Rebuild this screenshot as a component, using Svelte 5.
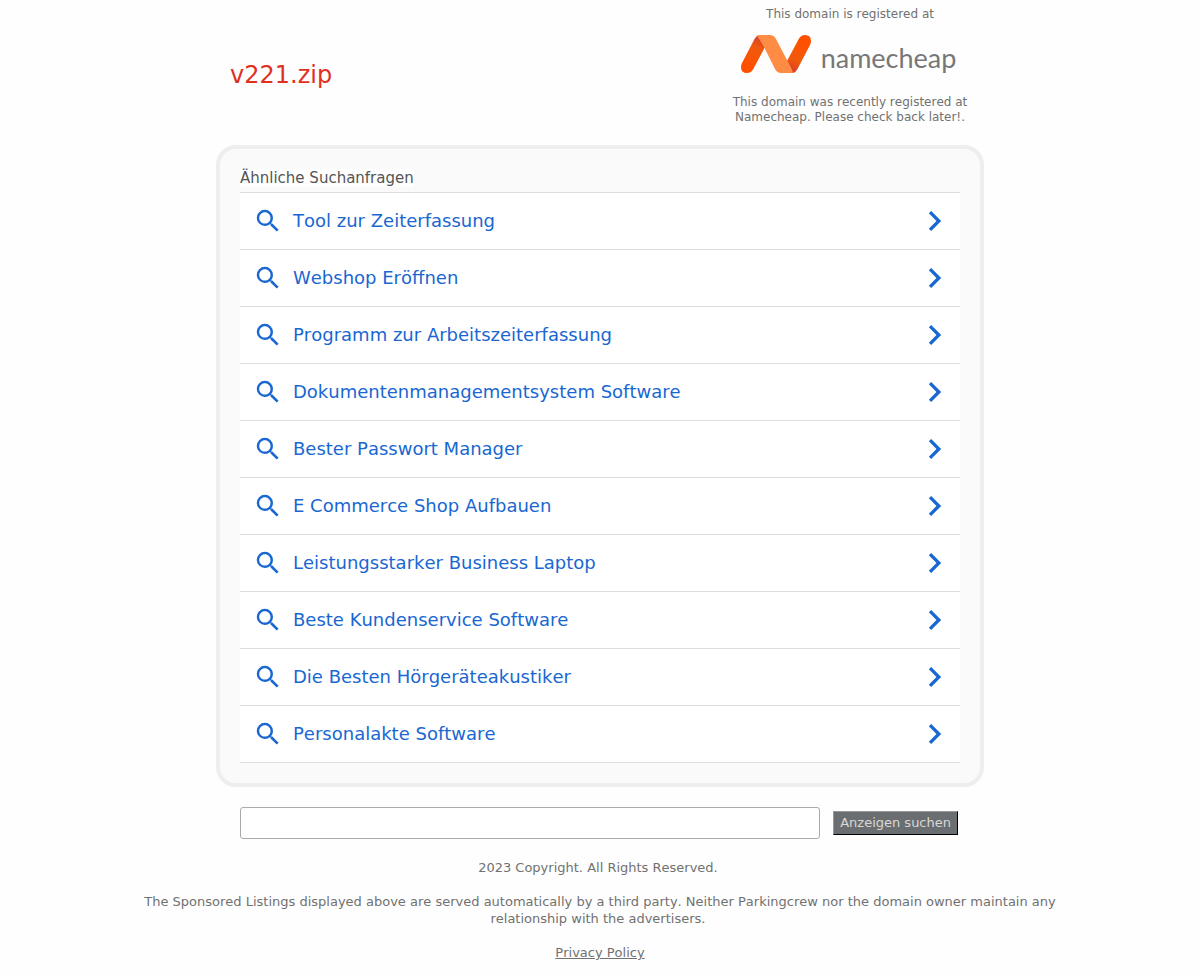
<script>
  const searches = [
    'Tool zur Zeiterfassung',
    'Webshop Eröffnen',
    'Programm zur Arbeitszeiterfassung',
    'Dokumentenmanagementsystem Software',
    'Bester Passwort Manager',
    'E Commerce Shop Aufbauen',
    'Leistungsstarker Business Laptop',
    'Beste Kundenservice Software',
    'Die Besten Hörgeräteakustiker',
    'Personalakte Software'
  ];
  let query = $state('');
</script>

<div class="page">
  <header>
    <h1>v221.zip</h1>
    <div class="registrar">
      <p>This domain is registered at</p>
      <a class="logo" href="#namecheap">
        <svg width="72" height="40" viewBox="0 0 72 40" aria-hidden="true">
          <defs>
            <linearGradient id="left" x1="20" y1="2" x2="8" y2="30" gradientUnits="userSpaceOnUse">
              <stop offset="0" stop-color="#d93b2b" />
              <stop offset="0.4" stop-color="#f05a0c" />
              <stop offset="1" stop-color="#ff5000" />
            </linearGradient>
            <linearGradient id="right" x1="52" y1="38" x2="64" y2="10" gradientUnits="userSpaceOnUse">
              <stop offset="0" stop-color="#d93b2b" />
              <stop offset="0.4" stop-color="#f05a0c" />
              <stop offset="1" stop-color="#ff5000" />
            </linearGradient>
          </defs>
          <path fill="url(#left)" d="M19 1h4l2 12L13 35.500Q11 39 7 39Q1 39 1 33Q1 31 2 29L14.500 5Q16 2 19 1z" />
          <path fill="url(#right)" d="M53 39h-4l-2-12L59 4.500Q61 1 65 1Q71 1 71 7Q71 9 70 11L57.500 35Q56 38 53 39z" />
          <path fill="#ff8c44" d="M19 1h11q4 0 6 4l12 23q5 9 5 11H41q-4 0-6-4L24 13Q20 6 17 2q1-1 2-1z" />
        </svg>
        <span>namecheap</span>
      </a>
      <p>This domain was recently registered at Namecheap. Please check back later!.</p>
    </div>
  </header>

  <main>
    <h2><span>Ähnliche Suchanfragen</span></h2>
    <ul>
      {#each searches as term}
        <li>
          <a href="#search">
            <svg width="30" height="30" viewBox="0 0 24 24" aria-hidden="true">
              <path d="M15.500 14h-.79l-.28-.27A6.471 6.471 0 0 0 16 9.500 6.500 6.500 0 1 0 9.500 16c1.610 0 3.090-.59 4.230-1.570l.27.28v.79l5 4.990L20.490 19l-4.990-5zm-6 0C7.010 14 5 11.990 5 9.500S7.010 5 9.500 5 14 7.010 14 9.500 11.990 14 9.500 14z" />
            </svg>
            <span>{term}</span>
            <svg width="40" height="40" viewBox="0 0 24 24" aria-hidden="true">
              <path d="M9.700 6L8.300 7.410 12.870 12l-4.570 4.590L9.700 18l6-6z" />
            </svg>
          </a>
        </li>
      {/each}
    </ul>
  </main>

  <form onsubmit={(e) => e.preventDefault()}>
    <input type="text" aria-label="Suche" bind:value={query} />
    <button type="submit">Anzeigen suchen</button>
  </form>
</div>

<footer>
  <p>2023 Copyright. All Rights Reserved.&nbsp;</p>
  <p>
    The Sponsored Listings displayed above are served automatically by a third party. Neither
    Parkingcrew nor the domain owner maintain any relationship with the advertisers.&nbsp;
  </p>
  <p><a href="#privacy">Privacy Policy</a></p>
</footer>

<style>
  :global(body) {
    background: #fefefe;
    color: #717171;
    font-family: "DejaVu Sans", sans-serif;
    font-kerning: none;
  }
  .page {
    box-sizing: border-box;
    max-width: 768px;
    margin: 0 auto;
  }
  header {
    display: flex;
    justify-content: space-between;
    align-items: center;
    padding: 7px 14px 20px;
  }
  h1 {
    margin: 0;
    padding-top: 18px;
    color: #e0301e;
    font-size: 24px;
    font-weight: 400;
    line-height: 32px;
  }
  .registrar {
    width: 240px;
    font-size: 12px;
    line-height: 15px;
    text-align: center;
  }
  p {
    margin: 0;
  }
  .logo {
    display: flex;
    align-items: center;
    justify-content: center;
    gap: 9px;
    padding: 12px 4px 21px 0;
    color: #777;
    font-family: Lato, sans-serif;
    font-size: 27px;
    text-decoration: none;
  }
  .logo span {
    padding-top: 8px;
    line-height: 32px;
  }
  main {
    padding: 20px;
    border: 4px solid #eee;
    border-radius: 20px;
    background: #fafafa;
  }
  h2 {
    margin: 0;
    padding-bottom: 5px;
    color: #555;
    font-size: 15px;
    font-weight: 400;
    line-height: 18px;
  }
  h2 span {
    background: #fefefe;
  }
  ul {
    margin: 0;
    padding: 0;
    border-top: 1px solid #dcdee0;
    background: #fff;
    list-style: none;
  }
  li {
    border-bottom: 1px solid #dcdee0;
  }
  li a {
    display: flex;
    align-items: center;
    gap: 10px;
    height: 56px;
    padding: 0 5px 0 13px;
    color: #1967d2;
    font-size: 18px;
    text-decoration: none;
  }
  li span {
    flex: 1;
    padding-bottom: 2px;
  }
  li svg {
    fill: currentColor;
  }
  form {
    display: flex;
    align-items: center;
    gap: 13px;
    padding: 20px 26px 20px 24px;
  }
  input {
    box-sizing: border-box;
    flex: 1;
    min-width: 0;
    height: 32px;
    padding: 4px 8px;
    border: 1px solid #aaa;
    border-radius: 3px;
    background: #fff;
    font: inherit;
  }
  button {
    box-sizing: border-box;
    height: 24px;
    padding: 0 6px 2px;
    border: 1px solid;
    border-color: #999 #000 #000 #999;
    background: #6b6e70;
    color: #d8d8d8;
    font: 13px "DejaVu Sans", sans-serif;
  }
  footer {
    display: grid;
    gap: 17px;
    max-width: 960px;
    margin: 0 auto;
    font-size: 13px;
    line-height: 17px;
    text-align: center;
  }
  footer a {
    color: inherit;
  }
</style>
